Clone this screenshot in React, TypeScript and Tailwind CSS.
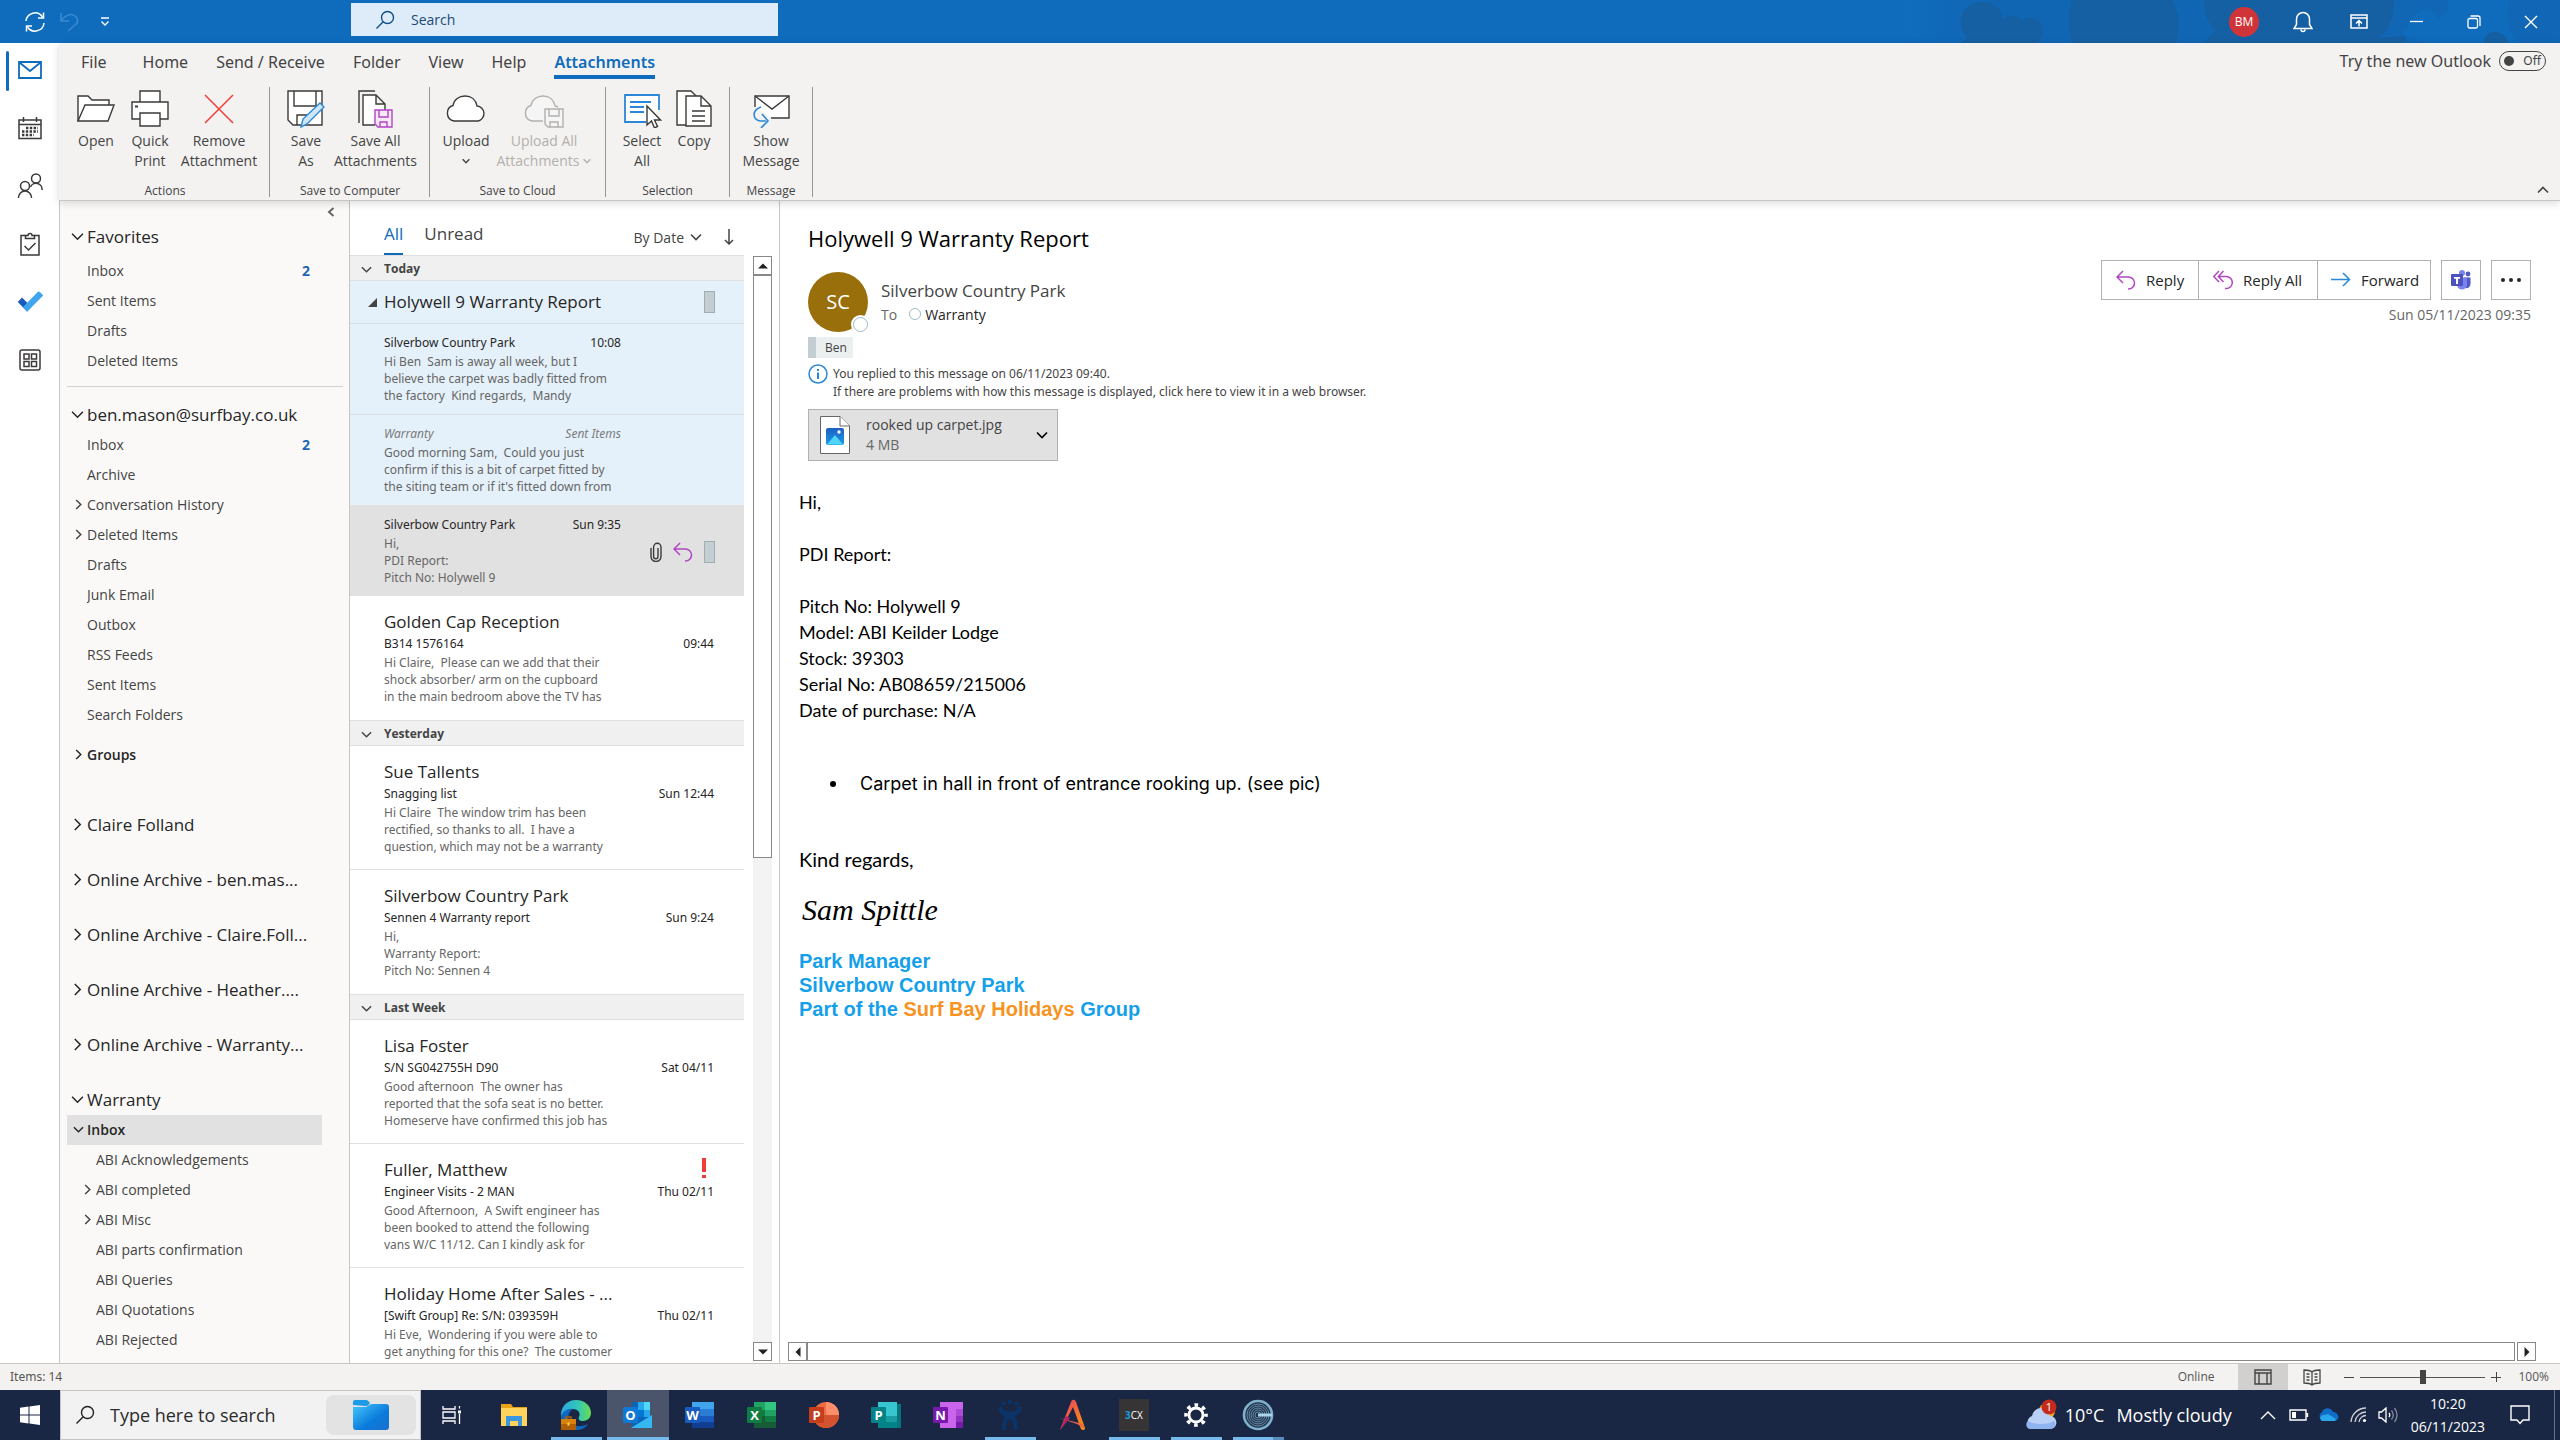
import React from "react";

/* ---------- shared icons ---------- */

type ChevProps = { className?: string; d?: string; weight?: number };

const Chevron = ({ className = "size-3", d = "M1 3.5l5 5 5-5", weight = 1.6 }: ChevProps) => (
  <svg viewBox="0 0 12 12" className={className} fill="none" stroke="currentColor" strokeWidth={weight}>
    <path d={d} />
  </svg>
);
const DOWN = "M1 3.5l5 5 5-5";
const RIGHT = "M3.5 1l5 5-5 5";
const UP = "M1 8.5l5-5 5 5";

const ReplyIcon = ({ className = "size-5" }: { className?: string }) => (
  <svg viewBox="0 0 20 20" className={className} fill="none" stroke="#b146c2" strokeWidth="1.5">
    <path d="M7 1L1 7l6 6M1 7h11.5a6 6 0 0 1 0 12H12" />
  </svg>
);
const ReplyAllIcon = () => (
  <svg viewBox="0 0 20 20" className="size-5" fill="none" stroke="#b146c2" strokeWidth="1.5">
    <path d="M6 1L.8 6.500l5.200 5.500M10.500 1L5.300 6.500l5.200 5.500M5.300 6.500h8a6 6 0 0 1 0 12H12" />
  </svg>
);
const ForwardIcon = () => (
  <svg viewBox="0 0 20 20" className="size-5" fill="none" stroke="#2b88d8" strokeWidth="1.500">
    <path d="M0 9.500h18.500M12 3l6.500 6.500L12 16" />
  </svg>
);
const Magnifier = ({ className = "size-5" }: { className?: string }) => (
  <svg viewBox="0 0 20 20" className={className} fill="none" stroke="currentColor" strokeWidth="1.4">
    <circle cx="12.500" cy="7.500" r="6" />
    <path d="M8.200 11.800L1.500 18.500" />
  </svg>
);

/* ---------- title bar ---------- */

const TitleBar = () => (
  <header className="relative flex h-[43px] shrink-0 items-center bg-[#0f6cbd] text-white">
    <svg
      className="absolute top-0 right-0 h-[43px] w-[660px]"
      viewBox="0 0 660 43"
      fill="#155fa3"
      aria-hidden="true"
    >
      <defs>
        <linearGradient id="haze" x1="0" x2="1">
          <stop offset="0" stopColor="#0f6cbd" />
          <stop offset=".15" stopColor="#1166b3" />
          <stop offset="1" stopColor="#1167b5" />
        </linearGradient>
      </defs>
      <rect width="660" height="43" fill="url(#haze)" />
      <path d="M62 43c2-4 6-3 5-7C55 28 60 2 82 2c16 0 22 12 20 18 6-6 16-6 20 1 8-8 22 0 21 11 0 5-3 8-6 11z" />
      <path d="M172 0h100c8 14 8 30 4 43H172c-4-16-4-30 0-43z" />
      <path d="M304 0h190c0 20-6 32-16 38l26-2c4 4 0 7-4 7H304l12-13c-10-8-12-20-12-30z" />
      <path fill="#0f6cbd" d="M548 0h60c0 18-4 32 14 43h-96c-16-8-30-6-20-14 8-20 24-28 32-10 8-4 12-10 10-19z" />
      <path d="M584 43c0-16 22-14 24 0z" />
    </svg>
    <div className="relative flex flex-1 items-center">
      <button aria-label="Send/Receive all folders" className="ml-6">
        <svg viewBox="0 0 22 22" className="size-[22px]" fill="none" stroke="#fff" strokeWidth="1.500">
          <path d="M2 10a9 9 0 0 1 16.500-4M20 12a9 9 0 0 1-16.500 4" />
          <path d="M19.500 1.500v5.500h-5.500M2.500 20.500V15H8" />
        </svg>
      </button>
      <button aria-label="Undo" className="ml-[14px]">
        <svg viewBox="0 0 20 20" className="size-5" fill="none" stroke="#3b8ad0" strokeWidth="1.500">
          <path d="M1 1v8h8M1 9c4-6 10-8 14-5s3 7 0 9l-7 6" />
        </svg>
      </button>
      <button aria-label="Customize toolbar" className="ml-5">
        <svg viewBox="0 0 10 10" className="size-[10px]" fill="none" stroke="#fff" strokeWidth="1.400">
          <path d="M1 1h8M1.500 4.500L5 8l3.500-3.500" />
        </svg>
      </button>
      <label className="mb-1 ml-[241px] flex h-[33px] w-[427px] items-center bg-[#deecf9] pl-6 text-[#0f4f8a]">
        <Magnifier />
        <input
          aria-label="Search"
          placeholder="Search"
          className="ml-4 flex-1 bg-transparent text-[14px] outline-none placeholder:text-[#1b4a75]"
        />
      </label>
    </div>
    <div className="relative flex items-center">
      <button className="size-[30px] rounded-full bg-[#d13438] text-[12px]">BM</button>
      <button aria-label="Notifications" className="ml-[34px]">
        <svg viewBox="0 0 20 22" className="h-[22px] w-5" fill="none" stroke="#fff" strokeWidth="1.500">
          <path d="M1 17.500h18l-2.500-4V8a6.500 6.500 0 0 0-13 0v5.500zM8 18.500a2 2 0 0 0 4 0" />
        </svg>
      </button>
      <button aria-label="Ribbon display options" className="ml-[37px]">
        <svg viewBox="0 0 18 15" className="h-[15px] w-[18px]" fill="none" stroke="#fff" strokeWidth="1.500">
          <path d="M1 1h16v13H1zM1 4h16M9 12.500V7M6 9.500l3-3 3 3" />
        </svg>
      </button>
      <button aria-label="Minimize" className="ml-[42px]">
        <svg viewBox="0 0 13 13" className="size-[13px]" stroke="#fff" strokeWidth="1.300"><path d="M0 6.500h13" /></svg>
      </button>
      <button aria-label="Restore" className="ml-[44px]">
        <svg viewBox="0 0 14 14" className="size-[14px]" fill="none" stroke="#fff" strokeWidth="1.300">
          <rect x="1" y="3.500" width="9.500" height="9.500" rx="1.500" />
          <path d="M3.500 1H11a2 2 0 0 1 2 2v8" />
        </svg>
      </button>
      <button aria-label="Close" className="mr-[22px] ml-[43px]">
        <svg viewBox="0 0 14 14" className="size-[14px]" stroke="#fff" strokeWidth="1.400"><path d="M1 1l12 12M13 1L1 13" /></svg>
      </button>
    </div>
  </header>
);

/* ---------- navigation rail ---------- */

const railIcons: { label: string; icon: React.ReactNode }[] = [
  {
    label: "Mail",
    icon: (
      <svg viewBox="0 0 24 18" className="h-[18px] w-6" fill="none" stroke="#0f6cbd" strokeWidth="1.800">
        <path d="M1 1h22v16H1zM1.500 1.500L12 10l10.500-8.500" />
      </svg>
    ),
  },
  {
    label: "Calendar",
    icon: (
      <svg viewBox="0 0 24 24" className="size-6" fill="none" stroke="#3b3a39" strokeWidth="1.500">
        <path d="M1 4h22v18.500H1zM1 8.500h22M5.500 1v5M18.500 1v5" />
        <path d="M8 12h12M4 15.500h16M4 19h12" strokeWidth="2.400" strokeDasharray="2.400 1.400" />
      </svg>
    ),
  },
  {
    label: "People",
    icon: (
      <svg viewBox="0 0 26 26" className="size-[26px]" fill="none" stroke="#3b3a39" strokeWidth="1.500">
        <circle cx="8" cy="13" r="4.500" />
        <path d="M1.500 25a6.500 7 0 0 1 13 0" />
        <circle cx="19" cy="5.500" r="4.500" />
        <path d="M13.500 14a6 6 0 0 1 11.500 3" />
      </svg>
    ),
  },
  {
    label: "Tasks",
    icon: (
      <svg viewBox="0 0 20 24" className="h-6 w-5" fill="none" stroke="#3b3a39" strokeWidth="1.500">
        <path d="M5.500 3.500H1V23h18V3.500h-4.500" />
        <path d="M5.500 6.500v-3H8a2 2 0 0 1 4 0h2.500v3zM4.500 14l4 4 7-7" />
      </svg>
    ),
  },
  {
    label: "To Do",
    icon: (
      <svg viewBox="0 0 26 22" className="h-[22px] w-[26px]">
        <path d="M5 6.500L.8 11 10 20.500l4.500-4.500z" fill="#185abd" />
        <path d="M20.500 1.200L5.800 16.200l4.300 4.500L25.500 5.200a1.200 1.200 0 0 0 0-1.800l-2.500-2.200a1.800 1.800 0 0 0-2.500 0z" fill="#41a5ee" />
      </svg>
    ),
  },
  {
    label: "Apps",
    icon: (
      <svg viewBox="0 0 22 22" className="size-[22px]" fill="none" stroke="#3b3a39" strokeWidth="1.500">
        <rect x="1" y="1" width="20" height="20" rx="2" />
        <path d="M5 5h5v5H5zM12.500 5h5v5h-5zM5 12.500h5v5H5zM12.500 12.500h5v5h-5z" />
      </svg>
    ),
  },
];

const Rail = () => (
  <nav aria-label="Modules" className="-mt-[2px] flex w-[59px] shrink-0 flex-col bg-white">
    {railIcons.map((r, i) => (
      <button key={r.label} aria-label={r.label} className="relative flex h-[58px] items-center justify-center">
        {i === 0 && <span className="absolute top-[10px] left-[6px] h-10 w-[3px] rounded bg-[#0f6cbd]" />}
        {r.icon}
      </button>
    ))}
  </nav>
);

/* ---------- ribbon ---------- */

const INK = "#3b3a39";
const ribbonIcons = {
  open: (
    <svg viewBox="0 0 38 38" className="size-[38px]" fill="#fff" stroke={INK} strokeWidth="1.400">
      <path d="M1 31V6h10l4 4h17v5" />
      <path d="M1 31l7-16h29l-6 16z" />
    </svg>
  ),
  print: (
    <svg viewBox="0 0 38 38" className="size-[38px]" fill="#fff" stroke={INK} strokeWidth="1.400">
      <path d="M9 12V1h20v11M1 12h36v17H1z" />
      <path d="M9 23h20v13H9z" />
      <path d="M4 16.500h3" strokeWidth="2" />
    </svg>
  ),
  remove: (
    <svg viewBox="0 0 38 38" className="size-[38px]" stroke="#ef3e36" strokeWidth="1.500">
      <path d="M5 5l28 28M33 5L5 33" />
    </svg>
  ),
  saveAs: (
    <svg viewBox="0 0 38 38" className="size-[38px]" fill="none" stroke={INK} strokeWidth="1.400">
      <path d="M1 1h34v34H6l-5-5z" fill="#fff" />
      <path d="M7 1v15h22V1M10 35V25h14" />
      <path d="M14 37l2-8 17-16 4 4-17 17z" fill="#cfe6f8" stroke="#2b88d8" />
    </svg>
  ),
  saveAll: (
    <svg viewBox="0 0 38 38" className="size-[38px]" fill="none" stroke={INK} strokeWidth="1.400">
      <path d="M2 33V1h16" />
      <path d="M18 35H6V5h13l9 9v6M19 5v9h9" fill="#fff" />
      <path d="M18 20h17v17H21l-3-3z" fill="#f6e8f8" stroke="#b146c2" />
      <path d="M22 20v7h9v-7M23 37v-5h7v5" stroke="#b146c2" />
    </svg>
  ),
  upload: (
    <svg viewBox="0 0 42 38" className="h-[38px] w-[42px]" fill="#fff" stroke={INK} strokeWidth="1.400">
      <path d="M9 31a8 8 0 0 1-1-15.500C9 9.500 14 6 20 6c6.500 0 11 4 12 10a7.600 7.600 0 0 1 1 15z" />
    </svg>
  ),
  uploadAll: (
    <svg viewBox="0 0 42 38" className="h-[38px] w-[42px]" fill="#f5f5f5" stroke="#b3b0ad" strokeWidth="1.400">
      <path d="M20 31H9a8 8 0 0 1-1-15.500C9 9.500 14 6 20 6c6.500 0 11 4 12 10l3 1" />
      <path d="M22 19h18v18H25l-3-3z" />
      <path d="M26 19v7h10v-7M27 37v-5h8v5" fill="none" />
    </svg>
  ),
  select: (
    <svg viewBox="0 0 40 38" className="h-[38px] w-10" fill="none" stroke={INK} strokeWidth="1.400">
      <path d="M24 32H3V5h34v15" fill="#fff" stroke="#2b88d8" strokeWidth="1.800" />
      <path d="M8 12h21M8 17h14M8 22h14" stroke="#2b88d8" strokeWidth="1.800" />
      <path d="M25 16v19l4.500-4 3 7 3-1.500-3-6.500h6z" fill="#fff" />
    </svg>
  ),
  copy: (
    <svg viewBox="0 0 38 38" className="size-[38px]" fill="#fff" stroke={INK} strokeWidth="1.400">
      <path d="M11 35H2V1h14l6 6" />
      <path d="M11 6h15l10 10v20H11z" />
      <path d="M26 6v10h10M17 21h13M17 26h13M17 31h13" fill="none" />
    </svg>
  ),
  show: (
    <svg viewBox="0 0 40 38" className="h-[38px] w-10" fill="none" stroke={INK} strokeWidth="1.400">
      <path d="M4 17V6h34v22H20" fill="#fff" />
      <path d="M4 6l17 13L38 6" />
      <path d="M10 17c-9 3-9 12-1 14h6M11 24l6 7-7 7" stroke="#2b88d8" strokeWidth="1.600" />
    </svg>
  ),
};

type RibbonItem = { icon: keyof typeof ribbonIcons; lines: string[]; width: string; chev?: boolean; disabled?: boolean };
const ribbonGroups: { name: string; width: string; items: RibbonItem[] }[] = [
  {
    name: "Actions",
    width: "w-[211px] pl-[11px]",
    items: [
      { icon: "open", lines: ["Open"], width: "w-[52px]" },
      { icon: "print", lines: ["Quick", "Print"], width: "w-[56px]" },
      { icon: "remove", lines: ["Remove", "Attachment"], width: "w-[82px]" },
    ],
  },
  {
    name: "Save to Computer",
    width: "w-[160px] pl-[10px]",
    items: [
      { icon: "saveAs", lines: ["Save", "As"], width: "w-[52px]" },
      { icon: "saveAll", lines: ["Save All", "Attachments"], width: "w-[87px]" },
    ],
  },
  {
    name: "Save to Cloud",
    width: "w-[176px] pl-[9px]",
    items: [
      { icon: "upload", lines: ["Upload", ""], width: "w-[54px]", chev: true },
      { icon: "uploadAll", lines: ["Upload All", "Attachments"], width: "w-[102px]", chev: true, disabled: true },
    ],
  },
  {
    name: "Selection",
    width: "w-[124px] pl-[9px]",
    items: [
      { icon: "select", lines: ["Select", "All"], width: "w-[54px]" },
      { icon: "copy", lines: ["Copy"], width: "w-[50px]" },
    ],
  },
  { name: "Message", width: "w-[83px] pl-[9px]", items: [{ icon: "show", lines: ["Show", "Message"], width: "w-[64px]" }] },
];

const tabs = ["File", "Home", "Send / Receive", "Folder", "View", "Help", "Attachments"];

const Ribbon = () => (
  <section className="relative z-10 flex h-[158px] shrink-0 flex-col border-b border-[#c8c6c4] bg-[#f3f2f1] text-[#444] shadow-[0_2px_8px_rgba(0,0,0,0.15)]">
    <div className="flex h-[38px] items-start justify-between pt-[6px]">
      <div role="tablist" className="flex gap-7 pl-[22px] font-['Noto_Sans',sans-serif] text-[16px]">
        {tabs.map((t) => (
          <button
            key={t}
            role="tab"
            aria-selected={t === "Attachments"}
            className={
              t === "Attachments"
                ? "h-[30px] border-b-4 border-[#0f6cbd] font-semibold text-[#0f6cbd]"
                : t === "File"
                  ? "mr-2 h-[30px] pb-1"
                  : "h-[30px] pb-1"
            }
          >
            {t}
          </button>
        ))}
      </div>
      <label className="mr-[14px] flex h-6 items-center gap-2 font-['Noto_Sans',sans-serif] text-[16px]">
        Try the new Outlook
        <input type="checkbox" className="sr-only" />
        <span className="flex h-5 w-[47px] items-center justify-between rounded-full border border-[#444] px-1 text-[12px]">
          <span className="size-[10px] rounded-full bg-[#444]" />
          Off
        </span>
      </label>
    </div>
    <div className="flex flex-1 items-start">
      {ribbonGroups.map((g) => (
        <div key={g.name} className={`flex h-[119px] flex-col pt-[6px] ${g.width}`}>
          <div className="-ml-[9px] flex h-[110px] flex-col justify-between border-r border-[#979593] pl-[9px]">
            <div className="flex">
              {g.items.map((it) => (
                <button
                  key={it.icon}
                  disabled={it.disabled}
                  className={`flex flex-col items-center text-[14px] leading-5 whitespace-nowrap ${it.width} ${it.disabled ? "text-[#b3b0ad]" : ""}`}
                >
                  <span className="mt-[3px] mb-[3px]">{ribbonIcons[it.icon]}</span>
                  <span>{it.lines[0]}</span>
                  {it.lines.length > 1 && (
                    <span className="flex h-5 items-center gap-1">
                      {it.lines[1]}
                      {it.chev && <Chevron className="size-2" weight={2.2} />}
                    </span>
                  )}
                </button>
              ))}
            </div>
            <div className="-mb-[2px] pr-[9px] text-center text-[12px] leading-4">{g.name}</div>
          </div>
        </div>
      ))}
    </div>
    <button aria-label="Collapse the ribbon" className="absolute right-[11px] bottom-1">
      <Chevron className="size-3" d={UP} />
    </button>
  </section>
);

/* ---------- folder pane ---------- */

type FolderRow = { name: string; chev?: string; count?: number; sub?: boolean; bold?: boolean; selected?: boolean };

const FolderItem = ({ name, chev, count, sub, bold, selected }: FolderRow) => (
  <li>
    <button
      className={`flex h-[30px] w-[255px] items-center pb-[2px] text-left text-[14px] ${sub ? "pl-[15px]" : "pl-[6px]"} ${
        selected ? "bg-[#e1e1e1]" : ""
      } ${bold ? "font-semibold text-[#262626]" : "text-[#444]"}`}
    >
      <span className="flex w-[14px] shrink-0 justify-start">
        {chev && <Chevron className="size-[11px]" d={chev} />}
      </span>
      <span className="flex-1 truncate">{name}</span>
      {count && <span className="mr-[12px] font-bold text-[#1e66b3]">{count}</span>}
    </button>
  </li>
);

const FolderHead = ({ name, chev = DOWN }: { name: string; chev?: string }) => (
  <h2>
    <button className="flex h-[30px] w-[276px] items-center pb-px pl-1 text-left text-[17px] text-[#262626]">
      <span className="flex w-4 shrink-0 justify-start">
        <Chevron className="size-[13px]" d={chev} weight={1.4} />
      </span>
      <span className="flex-1 truncate">{name}</span>
    </button>
  </h2>
);

const favourites: FolderRow[] = [{ name: "Inbox", count: 2 }, { name: "Sent Items" }, { name: "Drafts" }, { name: "Deleted Items" }];
const account: FolderRow[] = [
  { name: "Inbox", count: 2 },
  { name: "Archive" },
  { name: "Conversation History", chev: RIGHT },
  { name: "Deleted Items", chev: RIGHT },
  { name: "Drafts" },
  { name: "Junk Email" },
  { name: "Outbox" },
  { name: "RSS Feeds" },
  { name: "Sent Items" },
  { name: "Search Folders" },
];
const archives = [
  "Claire Folland",
  "Online Archive - ben.mas...",
  "Online Archive - Claire.Foll...",
  "Online Archive - Heather....",
  "Online Archive - Warranty...",
];
const warranty: FolderRow[] = [
  { name: "Inbox", chev: DOWN, bold: true, selected: true },
  { name: "ABI Acknowledgements", sub: true },
  { name: "ABI completed", sub: true, chev: RIGHT },
  { name: "ABI Misc", sub: true, chev: RIGHT },
  { name: "ABI parts confirmation", sub: true },
  { name: "ABI Queries", sub: true },
  { name: "ABI Quotations", sub: true },
  { name: "ABI Rejected", sub: true },
];

const FolderPane = () => (
  <nav
    aria-label="Folders"
    className="relative flex w-[291px] shrink-0 flex-col border-x border-[#c8c6c4] bg-[#faf9f8] pt-[21px] pl-[7px]"
  >
    <button aria-label="Minimize folder pane" className="absolute top-[6px] right-[14px] text-[#666]">
      <svg viewBox="0 0 8 10" className="h-[10px] w-2" fill="none" stroke="currentColor" strokeWidth="2">
        <path d="M6.500 1L2 5l4.500 4" />
      </svg>
    </button>
    <FolderHead name="Favorites" />
    <ul className="mt-1">{favourites.map((f) => <FolderItem key={f.name} {...f} />)}</ul>
    <div className="mt-[10px] mr-[6px] mb-[13px] h-px bg-[#d2d0ce]" />
    <FolderHead name="ben.mason@surfbay.co.uk" />
    <ul>{account.map((f) => <FolderItem key={f.name} {...f} />)}</ul>
    <ul className="mt-[10px] mb-10"><FolderItem name="Groups" chev={RIGHT} bold /></ul>
    {archives.map((a) => (
      <div key={a} className="h-[55px]"><FolderHead name={a} chev={RIGHT} /></div>
    ))}
    <FolderHead name="Warranty" />
    <ul>{warranty.map((f) => <FolderItem key={f.name} {...f} />)}</ul>
  </nav>
);

/* ---------- message list ---------- */

const CategoryBox = () => <span className="h-[22px] w-[11px] border border-[#9dafb1] bg-[#c4cdd1]" />;

const Band = ({ name }: { name: string }) => (
  <div className="flex h-[26px] shrink-0 items-center border-y border-[#e1dfdd] bg-[#f0f0f0] pt-[2px] pl-[11px] text-[12px] font-bold text-[#444]">
    <Chevron className="size-[11px]" />
    <span className="ml-[12px]">{name}</span>
  </div>
);

const previewText = "font-['Noto_Sans',sans-serif] text-[12px] leading-[17px] whitespace-pre text-[#666]";

type ThreadMail = { from: string; time: string; preview: string; sent?: boolean; selected?: boolean };
const ThreadItem = ({ from, time, preview, sent, selected }: ThreadMail) => (
  <li
    className={`flex h-[91px] justify-between border-t pt-[9px] pl-[34px] ${
      selected ? "border-[#e1e1e1] bg-[#e1e1e1]" : "border-[#dadfe3] bg-[#e5f1fa]"
    }`}
  >
    <div className="w-[237px]">
      <div
        className={`flex justify-between font-['Noto_Sans',sans-serif] text-[12px] leading-5 ${
          sent ? "text-[#7a7a7a] italic" : "text-[#262626]"
        }`}
      >
        <span>{from}</span>
        <span>{time}</span>
      </div>
      <p className={previewText}>{preview}</p>
    </div>
    {selected && (
      <div className="mr-[29px] flex items-center gap-[11px] pb-[8px]">
        <svg viewBox="0 0 12 20" className="h-5 w-3" fill="none" stroke="#3b3a39" strokeWidth="1.400">
          <path d="M8 6v8.500a2.200 2.200 0 0 1-4.400 0V5a3.700 3.700 0 0 1 7.400 0v9.500a5 5 0 0 1-10 0V6" />
        </svg>
        <ReplyIcon />
        <CategoryBox />
      </div>
    )}
  </li>
);

type Mail = { from: string; subject: string; time: string; preview: string; important?: boolean };
const MailItem = ({ from, subject, time, preview, important }: Mail) => (
  <li className="h-[124px] shrink-0 border-b border-[#e1dfdd] pt-[14px] pr-[30px] pl-[34px] last:border-b-0">
    <div className="flex h-6 items-center justify-between text-[17px] text-[#262626]">
      <span>{from}</span>
      {important && (
        <svg viewBox="0 0 4 20" className="mr-2 mb-1 h-5 w-1" fill="#ef3e36"><path d="M0 0h4v14H0zM0 17h4v3H0z" /></svg>
      )}
    </div>
    <div className="flex justify-between font-['Noto_Sans',sans-serif] text-[12px] leading-5 text-[#262626]">
      <span>{subject}</span>
      <span>{time}</span>
    </div>
    <p className={previewText}>{preview}</p>
  </li>
);

const ScrollButton = ({ label, d }: { label: string; d: string }) => (
  <button aria-label={label} className="flex size-[19px] shrink-0 items-center justify-center border border-[#8a8886] bg-white">
    <svg viewBox="0 0 10 10" className="size-[10px]" fill="#222"><path d={d} /></svg>
  </button>
);

const MessageList = () => (
  <section aria-label="Messages" className="flex w-[430px] shrink-0 border-r border-[#c8c6c4] bg-white">
    <div className="flex min-w-0 flex-1 flex-col overflow-hidden">
      <div className="flex h-[54px] shrink-0 justify-between pr-[10px] pl-[34px]">
        <div className="flex gap-[21px] pt-[20px] text-[17px] text-[#444]">
          <button className="h-[34px] border-b-2 border-[#0f6cbd] pb-[6px] text-[#0f6cbd]">All</button>
          <button className="h-[34px] pb-2">Unread</button>
        </div>
        <div className="flex items-center gap-[6px] pt-[18px] text-[14px] text-[#444]">
          <button className="flex items-center gap-[6px]">
            By Date
            <Chevron className="size-3" />
          </button>
          <button aria-label="Sort order" className="ml-4">
            <svg viewBox="0 0 10 16" className="h-4 w-[10px]" fill="none" stroke="currentColor" strokeWidth="1.500">
              <path d="M5 0v15M1 11l4 4 4-4" />
            </svg>
          </button>
        </div>
      </div>
      <Band name="Today" />
      <div className="flex h-[42px] shrink-0 items-center justify-between bg-[#e5f1fa] pr-[29px] pl-[18px]">
        <span className="flex items-center text-[17px] text-[#262626]">
          <svg viewBox="0 0 9 9" className="mr-[7px] size-[9px]" fill="#444"><path d="M9 0v9H0z" /></svg>
          Holywell 9 Warranty Report
        </span>
        <CategoryBox />
      </div>
      <ul className="shrink-0">
        <ThreadItem
          from="Silverbow Country Park"
          time="10:08"
          preview={"Hi Ben  Sam is away all week, but I\nbelieve the carpet was badly fitted from\nthe factory  Kind regards,  Mandy"}
        />
        <ThreadItem
          from="Warranty"
          time="Sent Items"
          sent
          preview={"Good morning Sam,  Could you just\nconfirm if this is a bit of carpet fitted by\nthe siting team or if it's fitted down from"}
        />
        <ThreadItem
          from="Silverbow Country Park"
          time="Sun 9:35"
          selected
          preview={"Hi,\nPDI Report:\nPitch No: Holywell 9"}
        />
      </ul>
      <ul className="shrink-0">
        <MailItem
          from="Golden Cap Reception"
          subject="B314 1576164"
          time="09:44"
          preview={"Hi Claire,  Please can we add that their\nshock absorber/ arm on the cupboard\nin the main bedroom above the TV has"}
        />
      </ul>
      <Band name="Yesterday" />
      <ul className="shrink-0">
        <MailItem
          from="Sue Tallents"
          subject="Snagging list"
          time="Sun 12:44"
          preview={"Hi Claire  The window trim has been\nrectified, so thanks to all.  I have a\nquestion, which may not be a warranty"}
        />
        <MailItem
          from="Silverbow Country Park"
          subject="Sennen 4 Warranty report"
          time="Sun 9:24"
          preview={"Hi,\nWarranty Report:\nPitch No: Sennen 4"}
        />
      </ul>
      <Band name="Last Week" />
      <ul className="min-h-0 flex-1 overflow-hidden">
        <MailItem
          from="Lisa Foster"
          subject="S/N SG042755H D90"
          time="Sat 04/11"
          preview={"Good afternoon  The owner has\nreported that the sofa seat is no better.\nHomeserve have confirmed this job has"}
        />
        <MailItem
          from="Fuller, Matthew"
          subject="Engineer Visits - 2 MAN"
          time="Thu 02/11"
          important
          preview={"Good Afternoon,  A Swift engineer has\nbeen booked to attend the following\nvans W/C 11/12. Can I kindly ask for"}
        />
        <MailItem
          from="Holiday Home After Sales - ..."
          subject="[Swift Group] Re: S/N: 039359H"
          time="Thu 02/11"
          preview={"Hi Eve,  Wondering if you were able to\nget anything for this one?  The customer"}
        />
      </ul>
    </div>
    <div className="mt-[55px] mr-[7px] mb-[2px] ml-[9px] flex w-[19px] flex-col bg-[#f3f3f3]">
      <ScrollButton label="Scroll up" d="M0 7.500h10L5 2.500z" />
      <div className="h-[583px] border border-[#8a8886] bg-white" />
      <div className="flex-1" />
      <ScrollButton label="Scroll down" d="M0 2.500h10L5 7.500z" />
    </div>
  </section>
);

/* ---------- reading pane ---------- */

const TeamsIcon = () => (
  <svg viewBox="0 0 20 20" className="size-5">
    <circle cx="17" cy="4" r="2.400" fill="#5059c9" />
    <circle cx="11" cy="3" r="3" fill="#7b83eb" />
    <path d="M13 7.500h6.500V14a4 4 0 0 1-5 4z" fill="#5059c9" />
    <path d="M6 7.500h10V14a5 5 0 0 1-10 1z" fill="#7b83eb" />
    <rect y="4" width="12" height="12" rx="1" fill="#4b53bc" />
    <path d="M3 7h6v1.800H7V14H5V8.800H3z" fill="#fff" />
  </svg>
);

const actionBtn = "flex h-10 items-center border border-[#b3b0ad] text-[15px] text-[#262626]";

const ReadingPane = () => (
  <main className="flex min-w-0 flex-1 flex-col bg-white">
    <div className="flex justify-between pr-[29px] pl-7">
      <div>
        <h1 className="pt-[22px] text-[22px] leading-[30px] text-black">Holywell 9 Warranty Report</h1>
        <div className="mt-[19px] flex gap-[13px]">
          <div className="relative flex size-[60px] items-center justify-center rounded-full bg-[#986f0b] text-[20px] text-white">
            SC
            <span className="absolute right-0 bottom-0 size-[15px] rounded-full border border-[#9dbbc5] bg-white ring-2 ring-white" />
          </div>
          <div className="pt-[7px]">
            <div className="text-[17px] leading-6 text-[#444]">Silverbow Country Park</div>
            <div className="flex h-[22px] items-center text-[14px] text-[#666]">
              To
              <span className="mr-1 ml-3 size-3 rounded-full border border-[#9dbbc5]" />
              <span className="text-[#262626]">Warranty</span>
            </div>
          </div>
        </div>
        <div className="mt-[5px] flex h-[21px] w-[45px] items-center border-l-8 border-[#c4cdd1] bg-[#ebeff0] pl-[9px] text-[12px] text-[#444]">
          Ben
        </div>
        <div className="mt-[6px] flex gap-[5px] font-['Noto_Sans',sans-serif] text-[12px] leading-[18px] text-[#444]">
          <svg viewBox="0 0 20 20" className="size-5" fill="none" stroke="#2b88d8" strokeWidth="1.500">
            <circle cx="10" cy="10" r="9" />
            <path d="M10 8.500V15M10 5v2" strokeWidth="2" />
          </svg>
          <div className="pt-px">
            You replied to this message on 06/11/2023 09:40.
            <br />
            If there are problems with how this message is displayed, click here to view it in a web browser.
          </div>
        </div>
        <button className="mt-2 flex h-[52px] w-[250px] items-center border border-[#b3b0ad] bg-[#e1e1e1] pl-[11px] text-left">
          <svg viewBox="0 0 30 38" className="h-[38px] w-[30px]" fill="#fff" stroke="#666">
            <path d="M.500.500H20l9.500 9.500v27.500H.500z" />
            <path d="M20 .500V10h9.500" />
            <defs>
              <linearGradient id="pic" x1="0" y1="0" x2="0" y2="1">
                <stop offset="0" stopColor="#1d5fc4" />
                <stop offset="1" stopColor="#1a9be8" />
              </linearGradient>
            </defs>
            <rect x="6" y="12" width="18" height="17" rx="2" fill="url(#pic)" stroke="none" />
            <path d="M7 28.500l8-9.500 8 9.500z" fill="#50d5f8" stroke="none" />
            <circle cx="19" cy="16" r="1.700" stroke="none" />
          </svg>
          <span className="ml-4 flex-1 text-[14px] leading-5 text-[#444]">
            rooked up carpet.jpg
            <br />
            <span className="text-[#666]">4 MB</span>
          </span>
          <Chevron className="mr-[9px] size-3" />
        </button>
      </div>
      <div className="pt-[59px] text-right">
        <div className="flex">
          <button className={`${actionBtn} w-[98px] gap-[10px] pl-[14px]`}><ReplyIcon />Reply</button>
          <button className={`${actionBtn} -ml-px w-[120px] gap-[10px] pl-[14px]`}><ReplyAllIcon />Reply All</button>
          <button className={`${actionBtn} -ml-px w-[114px] gap-[10px] pl-[13px]`}><ForwardIcon />Forward</button>
          <button aria-label="Share to Teams" className={`${actionBtn} ml-[10px] w-10 justify-center`}><TeamsIcon /></button>
          <button aria-label="More actions" className={`${actionBtn} ml-[10px] w-10 justify-center`}>
            <svg viewBox="0 0 20 4" className="h-1 w-5" fill="#262626">
              <circle cx="2" cy="2" r="2" /><circle cx="10" cy="2" r="2" /><circle cx="18" cy="2" r="2" />
            </svg>
          </button>
        </div>
        <time className="block pt-[3px] text-[14px] leading-6 text-[#666]">Sun 05/11/2023 09:35</time>
      </div>
    </div>

    <article className="flex-1 pt-7 pl-[19px] font-[Lato,sans-serif] text-[18px] leading-[26px] text-black">
      <p>Hi,</p>
      <p className="mt-[26px]">PDI Report:</p>
      <p className="mt-[26px]">Pitch No: Holywell 9</p>
      <p>Model: ABI Keilder Lodge</p>
      <p>Stock: 39303</p>
      <p>Serial No: AB08659/215006</p>
      <p>Date of purchase: N/A</p>
      <ul className="mt-12 pl-[31px] font-[Inter,sans-serif] text-[18px]">
        <li className="flex items-center gap-[24px]">
          <span aria-hidden="true" className="size-[6px] rounded-full bg-black" />
          Carpet in hall in front of entrance rooking up. (see pic)
        </li>
      </ul>
      <p className="mt-[49px] text-[20px]">Kind regards,</p>
      <p className="mt-[25px] pl-[3px] font-['Liberation_Serif',serif] text-[30px] italic">Sam Spittle</p>
      <div className="mt-[26px] font-['Liberation_Sans',sans-serif] text-[20px] leading-[24px] font-bold text-[#169fea]">
        <p>Park Manager</p>
        <p>Silverbow Country Park</p>
        <p>Part of the <span className="text-[#f7931e]">Surf Bay Holidays</span> Group</p>
      </div>
    </article>

    <div className="mr-6 mb-[2px] ml-2 flex">
      <ScrollButton label="Scroll left" d="M7.500 0v10L2.500 5z" />
      <div className="mr-[2px] flex-1 border border-[#8a8886]" />
      <ScrollButton label="Scroll right" d="M2.500 0v10L7.500 5z" />
    </div>
  </main>
);

/* ---------- status bar ---------- */

const StatusBar = () => (
  <footer className="flex h-[27px] shrink-0 items-center justify-between border-t border-[#c8c6c4] bg-[#f3f2f1] pr-[11px] pl-[10px] text-[12px] text-[#555]">
    <span className="font-['Noto_Sans',sans-serif]">Items: 14</span>
    <div className="flex h-full items-center">
      <span className="mr-6">Online</span>
      <button aria-label="Normal view" className="flex h-full w-[50px] items-center justify-center bg-[#d2d0ce]">
        <svg viewBox="0 0 18 16" className="h-4 w-[18px]" fill="none" stroke="#444" strokeWidth="1.400">
          <path d="M1 1h16v14H1zM1 4h16M5 4v11M13 4v11" />
        </svg>
      </button>
      <button aria-label="Reading view" className="ml-[15px]">
        <svg viewBox="0 0 18 17" className="h-[17px] w-[18px]" fill="none" stroke="#444" strokeWidth="1.300">
          <path d="M9 3C7 1 4 1 1 1v13c3 0 6 0 8 2 2-2 5-2 8-2V1c-3 0-6 0-8 2zM9 3v13M3.500 5h3M3.500 8h3M3.500 11h3M11.500 5h3M11.500 8h3M11.500 11h3" />
        </svg>
      </button>
      <button aria-label="Zoom out" className="ml-[23px]">
        <svg viewBox="0 0 10 10" className="size-[10px]" stroke="#444"><path d="M0 5.500h10" /></svg>
      </button>
      <input
        type="range"
        aria-label="Zoom"
        defaultValue={50}
        className="mx-[6px] h-[14px] w-[125px] appearance-none bg-[linear-gradient(#555,#555)] bg-[length:100%_1px] bg-center bg-no-repeat [&::-webkit-slider-thumb]:h-[14px] [&::-webkit-slider-thumb]:w-[6px] [&::-webkit-slider-thumb]:appearance-none [&::-webkit-slider-thumb]:bg-[#444]"
      />
      <button aria-label="Zoom in">
        <svg viewBox="0 0 10 10" className="size-[10px]" stroke="#444"><path d="M0 5.500h10M5.500 0v10" /></svg>
      </button>
      <span className="ml-[17px]">100%</span>
    </div>
  </footer>
);

/* ---------- taskbar ---------- */

const Letter = ({ x, ch }: { x: number; ch: string }) => (
  <text x={x} y="20.500" fontSize="13" fontWeight="700" fill="#fff" textAnchor="middle" fontFamily="Open Sans, sans-serif">
    {ch}
  </text>
);

const taskIcons: { label: string; icon: React.ReactNode; bar?: string; active?: boolean }[] = [
  {
    label: "Task View",
    icon: (
      <svg viewBox="0 0 20 20" className="size-5" fill="none" stroke="#fff" strokeWidth="1.300">
        <path d="M1 1v3h12V1M1 7h12v6H1zM1 19v-3h12v3M17.500 1v2.500M17.500 9v10" />
        <path d="M16 5.500h3v3h-3z" fill="#fff" stroke="none" />
      </svg>
    ),
  },
  {
    label: "File Explorer",
    icon: (
      <svg viewBox="0 0 28 24" className="h-6 w-7">
        <path d="M1 1h10l2 3h14v19H1z" fill="#e8a317" />
        <path d="M1 5h26v18H1z" fill="#ffd35c" />
        <path d="M6 23V13h16v10h-4v-5h-8v5z" fill="#3b97dd" />
      </svg>
    ),
  },
  {
    label: "Microsoft Edge",
    bar: "w-[51px] bg-[#76b9ed]",
    icon: (
      <svg viewBox="0 0 32 32" className="size-8">
        <defs>
          <linearGradient id="edge" x1="0" y1="0" x2="1" y2="0">
            <stop offset="0" stopColor="#2aa7e8" />
            <stop offset=".6" stopColor="#35c9b0" />
            <stop offset="1" stopColor="#6bdc4c" />
          </linearGradient>
        </defs>
        <path d="M16 1c9 0 15 6 15 13 0 5-4 8-8 8s-5-2-4-4c2-4-1-8-6-8S3 13 1 18C0 8 7 1 16 1z" fill="url(#edge)" />
        <path d="M1 17c2-5 7-8 12-7-5 3-6 9-2 14 4 4 11 4 17 1-3 5-8 6-12 6C7 31 1 25 1 17z" fill="#1068bd" />
        <path d="M1 20h15v11H1z" fill="#d98207" />
        <path d="M1 25h15v6H1z" fill="#b05f06" />
        <path d="M6 20v-2h5v2" fill="none" stroke="#b05f06" strokeWidth="1.500" />
        <path d="M7.500 23.500h2v3h-2z" fill="#ffd35c" />
      </svg>
    ),
  },
  {
    label: "Outlook",
    bar: "w-full bg-[#76b9ed]",
    active: true,
    icon: (
      <svg viewBox="0 0 32 32" className="size-8">
        <path d="M10 3h18v24H10z" fill="#0a64ba" />
        <path d="M16 3h6v8h-6z" fill="#28a8ea" />
        <path d="M22 3h6v8h-6z" fill="#50d9ff" />
        <path d="M16 11h6v7h-6z" fill="#0078d4" />
        <path d="M22 11h6v7h-6z" fill="#28a8ea" />
        <path d="M9 29h21V16L19 23z" fill="#1490df" />
        <path d="M9 29l21-13v13z" fill="#35b8f1" />
        <rect x="1" y="8" width="15" height="16" rx="1" fill="#0f78d4" />
        <Letter x={8.5} ch="O" />
      </svg>
    ),
  },
  {
    label: "Word",
    icon: (
      <svg viewBox="0 0 32 32" className="size-8">
        <path d="M8 3h22v7H8z" fill="#41a5ee" /><path d="M8 10h22v7H8z" fill="#2b7cd3" />
        <path d="M8 17h22v6H8z" fill="#185abd" /><path d="M8 23h22v6H8z" fill="#103f91" />
        <rect x="1" y="8" width="15" height="16" rx="1" fill="#185abd" />
        <Letter x={8.5} ch="W" />
      </svg>
    ),
  },
  {
    label: "Excel",
    icon: (
      <svg viewBox="0 0 32 32" className="size-8">
        <path d="M8 3h11v8H8z" fill="#21a366" /><path d="M19 3h11v8H19z" fill="#33c481" />
        <path d="M8 11h11v6H8z" fill="#107c41" /><path d="M19 11h11v6H19z" fill="#21a366" />
        <path d="M8 17h22v12H8z" fill="#185c37" /><path d="M19 17h11v6H19z" fill="#107c41" />
        <rect x="1" y="8" width="15" height="16" rx="1" fill="#107c41" />
        <Letter x={8.5} ch="X" />
      </svg>
    ),
  },
  {
    label: "PowerPoint",
    icon: (
      <svg viewBox="0 0 32 32" className="size-8">
        <circle cx="18" cy="16" r="13" fill="#ed6c47" />
        <path d="M18 3a13 13 0 0 1 13 13H18z" fill="#ff8f6b" />
        <path d="M5 16h26a13 13 0 0 1-26 0z" fill="#d35230" />
        <rect x="1" y="8" width="15" height="16" rx="1" fill="#c43e1c" />
        <Letter x={8.5} ch="P" />
      </svg>
    ),
  },
  {
    label: "Publisher",
    icon: (
      <svg viewBox="0 0 32 32" className="size-8">
        <path d="M16 5h15v24H16z" fill="#04757a" />
        <path d="M8 3h19v14H8z" fill="#37c6d0" /><path d="M8 17h19v6H8z" fill="#1a9ba1" /><path d="M8 23h19v6H8z" fill="#038387" />
        <rect x="1" y="8" width="15" height="16" rx="1" fill="#038387" />
        <Letter x={8.5} ch="P" />
      </svg>
    ),
  },
  {
    label: "OneNote",
    icon: (
      <svg viewBox="0 0 32 32" className="size-8">
        <path d="M8 3h23v26H8z" fill="#ca64ea" />
        <path d="M24 10h7v7h-7z" fill="#ae4bd5" /><path d="M24 17h7v6h-7z" fill="#9332bf" /><path d="M24 23h7v6h-7z" fill="#7719aa" />
        <rect x="1" y="8" width="15" height="16" rx="1" fill="#7719aa" />
        <Letter x={8.5} ch="N" />
      </svg>
    ),
  },
  {
    label: "Jira",
    bar: "w-[51px] bg-[#76b9ed]",
    icon: (
      <svg viewBox="0 0 32 32" className="size-8" fill="#0a3368">
        <circle cx="16" cy="3" r="2.300" /><circle cx="9.500" cy="4.500" r="2" /><circle cx="22.500" cy="4.500" r="2" />
        <path d="M4 8h4c1 6 15 6 16 0h4c-1 6-4 8-7 9 3 4 3 10 3 14h-4c0-5-1-9-4-11-3 2-4 6-4 11H8c0-4 0-10 3-14-3-1-6-3-7-9z" />
      </svg>
    ),
  },
  {
    label: "A",
    icon: (
      <svg viewBox="0 0 32 32" className="size-8">
        <defs>
          <linearGradient id="orange" x1="0" y1="0" x2="1" y2="1">
            <stop offset="0" stopColor="#e9386b" />
            <stop offset="1" stopColor="#ff9a00" />
          </linearGradient>
        </defs>
        <path d="M4 31L15 3c1-3 4-3 5 0l9 26c0 2-2 3-4 1L17 8 7 27z" fill="url(#orange)" />
        <path d="M3 19l24 6 2 5-8-5z" fill="#f0654a" />
        <path d="M4 31l6-14 4 2z" fill="#b5226a" />
      </svg>
    ),
  },
  {
    label: "3CX",
    bar: "w-[51px] bg-[#76b9ed]",
    icon: (
      <span className="flex h-8 w-[30px] items-center justify-center bg-[#373435] text-[10px] text-white">
        <b className="text-[#1b9ddb]">3</b>CX
      </span>
    ),
  },
  {
    label: "Settings",
    bar: "w-[51px] bg-[#76b9ed]",
    icon: (
      <svg viewBox="0 0 24 24" className="size-6" fill="none" stroke="#fff">
        <circle cx="12" cy="12" r="7" strokeWidth="2.800" />
        <circle cx="12" cy="12" r="10" strokeWidth="3.600" strokeDasharray="3.600 4.254" strokeDashoffset="1.800" />
      </svg>
    ),
  },
  {
    label: "Remote client",
    bar: "w-[51px] bg-[linear-gradient(to_right,#76b9ed_79%,#5a8cbb_79%)]",
    icon: (
      <svg viewBox="0 0 32 32" className="size-8" fill="none" stroke="#7fb0cc">
        <circle cx="16" cy="16" r="14" strokeWidth="2.600" fill="#22344f" />
        <circle cx="16" cy="16" r="11" strokeWidth=".7" /><circle cx="16" cy="16" r="9" strokeWidth=".7" />
        <circle cx="16" cy="16" r="7" strokeWidth=".7" /><circle cx="16" cy="16" r="5" strokeWidth=".7" /><circle cx="16" cy="16" r="3" strokeWidth=".7" />
        <path d="M16 16h14" stroke="#a9d3e6" strokeWidth="3" />
      </svg>
    ),
  },
];

const Taskbar = () => (
  <footer className="flex h-[50px] shrink-0 items-stretch bg-[#1a2744] text-white">
    <button aria-label="Start" className="flex w-[60px] items-center justify-center">
      <svg viewBox="0 0 20 20" className="size-5" fill="#fff">
        <path d="M0 2.800l8.500-1.200v8H0zM9.500 1.400L20 0v9.600H9.500zM0 10.500h8.500v8L0 17.300zM9.500 10.500H20V20L9.500 18.600z" />
      </svg>
    </button>
    <label className="flex w-[361px] items-center border border-[#c4c4c4] bg-[#f2f2f2] pl-[14px] text-[#222]">
      <Magnifier />
      <input
        aria-label="Type here to search"
        placeholder="Type here to search"
        className="ml-[15px] min-w-0 flex-1 bg-transparent text-[18px] outline-none placeholder:text-[#2b2b2b]"
      />
      <span className="mr-1 flex h-10 w-[90px] items-center justify-center rounded-lg bg-[#e3e3e3]">
        <svg viewBox="0 0 36 32" className="h-8 w-9">
          <defs>
            <linearGradient id="fold" x1="0" y1="0" x2="1" y2="1">
              <stop offset="0" stopColor="#46c8fb" />
              <stop offset=".6" stopColor="#0a7bdc" />
              <stop offset="1" stopColor="#1a6fd0" />
            </linearGradient>
          </defs>
          <path d="M0 6V3a2 2 0 0 1 2-2h11c2 0 2 1 4 3-2 3-3 3-5 3z" fill="#1e9be8" />
          <path d="M0 8h12c3 0 4-3 7-3h14a3 3 0 0 1 3 3v20a3 3 0 0 1-3 3H3a3 3 0 0 1-3-3z" fill="url(#fold)" />
        </svg>
      </span>
    </label>
    <div className="flex flex-1">
      {taskIcons.map((t) => (
        <button
          key={t.label}
          aria-label={t.label}
          className={`relative flex w-[62px] items-center justify-center ${t.active ? "bg-[#4a556c]" : ""}`}
        >
          {t.icon}
          {t.bar && <span className={`absolute bottom-0 h-[3px] ${t.bar}`} />}
        </button>
      ))}
    </div>
    <div className="flex items-center">
      <button className="flex items-center text-[18px]">
        <svg viewBox="0 0 32 32" className="size-8">
          <circle cx="22" cy="12" r="8" fill="#f5a524" />
          <path d="M7 30a7 7 0 0 1 0-13c1-5 5-8 9-8s8 3 9 8c9 1 8 13 0 13z" fill="#b9d0f7" />
          <path d="M6 30c-5 0-6-6-3-8 6 4 20 4 26 0 3 4 0 8-4 8z" fill="#90b4f0" />
          <circle cx="24" cy="8" r="7.500" fill="#c42b1c" />
          <text x="24" y="12" fontSize="11" fill="#fff" textAnchor="middle" fontFamily="Open Sans, sans-serif">1</text>
        </svg>
        <span className="ml-[8px]">10°C</span>
        <span className="ml-3">Mostly cloudy</span>
      </button>
      <button aria-label="Show hidden icons" className="ml-[28px]">
        <svg viewBox="0 0 16 10" className="h-[10px] w-4" fill="none" stroke="#fff" strokeWidth="1.400"><path d="M1 9l7-7 7 7" /></svg>
      </button>
      <svg viewBox="0 0 20 12" className="ml-[13px] h-3 w-5" fill="none" stroke="#fff" strokeWidth="1.400">
        <path d="M1 1h16v10H1zM18.500 4v4" /><path d="M3 3h4v6H3z" fill="#fff" stroke="none" />
      </svg>
      <svg viewBox="0 0 21 14" className="ml-[9px] h-[14px] w-[21px]">
        <path d="M5 13a5 5 0 0 1-1-9C6-1 13-1 15 4c6 0 8 9 1 9z" fill="#0f6cc9" />
        <path d="M4 13c-3-2-2-6 2-6l4-1 8 5-1 2z" fill="#28a8ea" />
      </svg>
      <svg viewBox="0 0 17 16" className="ml-[11px] h-4 w-[17px]" fill="none" stroke="#fff" strokeWidth="1.300">
        <path d="M1 15A15 15 0 0 1 16 1M5 15A11 11 0 0 1 16 5M9 15a7 7 0 0 1 7-6.500" opacity=".8" />
        <circle cx="14.500" cy="13.500" r="1.600" fill="#fff" stroke="none" />
      </svg>
      <svg viewBox="0 0 21 16" className="ml-[11px] h-4 w-[21px]" fill="none" stroke="#fff" strokeWidth="1.300">
        <path d="M1 5h2.500L8 1v14l-4.500-4H1zM11 6q1.500 2 0 4" />
        <path d="M13.500 3.500q3.500 4.500 0 9M16.500 1q5 7 0 14" opacity=".45" />
      </svg>
      <div className="ml-3 text-center text-[14px] leading-[23px]">
        <div>10:20</div>
        <div>06/11/2023</div>
      </div>
      <button aria-label="Notifications" className="mr-6 ml-[25px]">
        <svg viewBox="0 0 20 20" className="size-5" fill="none" stroke="#fff" strokeWidth="1.400">
          <path d="M1 1h18v14h-6l-3 3.500L7 15H1z" />
        </svg>
      </button>
      <div className="h-full w-[6px] border-l border-[#6b7488]" />
    </div>
  </footer>
);

/* ---------- page ---------- */

export default function App() {
  return (
    <div className="flex h-screen flex-col overflow-hidden bg-white font-['Open_Sans',sans-serif]">
      <TitleBar />
      <div className="flex min-h-0 flex-1">
        <Rail />
        <div className="flex min-w-0 flex-1 flex-col">
          <Ribbon />
          <div className="flex min-h-0 flex-1">
            <FolderPane />
            <MessageList />
            <ReadingPane />
          </div>
        </div>
      </div>
      <StatusBar />
      <Taskbar />
    </div>
  );
}
